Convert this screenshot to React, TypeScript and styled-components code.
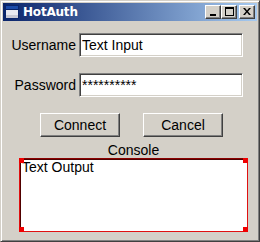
import styled, { createGlobalStyle } from 'styled-components';

const Face = '#D4D0C8';
const Shadow = '#808080';
const DarkShadow = '#404040';

const GlobalStyle = createGlobalStyle`
  html, body {
    margin: 0;
    padding: 0;
    background: ${Face};
  }
  body {
    font-family: "Liberation Sans", Arial, sans-serif;
  }
`

function AppIcon() {
  return (
    <svg width="14" height="14" viewBox="0 0 14 14">
      <rect x="0.5" y="0.5" width="13" height="13" fill="#ffffff" stroke="#0A246A" />
      <rect x="1" y="1" width="12" height="3" fill="#1C4BA8" />
      <rect x="1" y="4" width="12" height="1" fill="#0A246A" />
      <rect x="1" y="5" width="12" height="8" fill="#E8E8F0" />
      <rect x="1" y="10" width="12" height="3" fill="#C8C8D4" />
    </svg>
  );
}

function MinGlyph() {
  return (
    <svg width="8" height="8" viewBox="0 0 8 8">
      <rect x="1" y="6" width="6" height="2" fill="#000" />
    </svg>
  );
}

function MaxGlyph() {
  return (
    <svg width="9" height="9" viewBox="0 0 9 9">
      <rect x="0.5" y="0.5" width="8" height="8" fill="none" stroke="#000" />
      <rect x="0" y="1" width="9" height="1" fill="#000" />
    </svg>
  );
}

function CloseGlyph() {
  return (
    <svg width="8" height="7" viewBox="0 0 8 7">
      <path d="M0 0h2l2 2.5L6 0h2L5 3.5 8 7H6L4 4.5 2 7H0l3-3.5z" fill="#000" />
    </svg>
  );
}

export default function App() {
  return (
    <>
      <GlobalStyle />
      <Window>
        <TitleBar>
          <AppIcon />
          <Caption>HotAuth</Caption>
          <CaptionButtons>
            <CaptionButton><MinGlyph /></CaptionButton>
            <CaptionButton><MaxGlyph /></CaptionButton>
            <CaptionButton $gap><CloseGlyph /></CaptionButton>
          </CaptionButtons>
        </TitleBar>

        <Client>
          <Form>
            <Label>Username</Label>
            <Input defaultValue="Text Input" />
            <Label>Password</Label>
            <Input defaultValue="**********" />
          </Form>

          <ButtonRow>
            <Button>Connect</Button>
            <Button>Cancel</Button>
          </ButtonRow>

          <ConsoleSection>
            <ConsoleLabel>Console</ConsoleLabel>
            <ConsoleBox>
              Text Output
              <Handle $top $left />
              <Handle $top />
              <Handle $left />
              <Handle />
            </ConsoleBox>
          </ConsoleSection>
        </Client>
      </Window>
    </>
  );
}

const Window = styled.div`
  width: 260px;
  height: 242px;
  box-sizing: border-box;
  display: flex;
  flex-direction: column;
  background: ${Face};
  border: 1px solid;
  border-color: ${Face} ${DarkShadow} ${DarkShadow} ${Face};
  box-shadow: inset 1px 1px #ffffff, inset -1px -1px ${Shadow};
  padding: 2px;
`

const TitleBar = styled.div`
  height: 18px;
  flex-shrink: 0;
  display: flex;
  align-items: center;
  padding: 0 2px 0 2px;
  background: linear-gradient(to right, #0A246A, #A6CAF0);
  color: #ffffff;
`

const Caption = styled.span`
  margin-left: 4px;
  font-family: "DejaVu Sans", "Liberation Sans", sans-serif;
  font-weight: bold;
  font-size: 12px;
  letter-spacing: -0.2px;
  flex: 1;
`

const CaptionButtons = styled.div`
  display: flex;
  align-items: center;
`

const CaptionButton = styled.div<{ $gap?: boolean }>`
  width: 16px;
  height: 14px;
  box-sizing: border-box;
  margin-left: ${props => props.$gap ? '2px' : '0'};
  background: ${Face};
  border: 1px solid;
  border-color: #ffffff ${DarkShadow} ${DarkShadow} #ffffff;
  box-shadow: inset -1px -1px ${Shadow};
  display: flex;
  align-items: center;
  justify-content: center;
  padding-bottom: 1px;
`

const Client = styled.div`
  flex: 1;
  display: flex;
  flex-direction: column;
  font-size: 14px;
  color: #000000;
`

const Form = styled.div`
  margin-top: 12px;
  padding-left: 7px;
  display: grid;
  grid-template-columns: 66px 164px;
  column-gap: 3px;
  row-gap: 16px;
  align-items: center;
`

const Label = styled.div`
  text-align: right;
  white-space: nowrap;
`

const Input = styled.input`
  width: 164px;
  height: 24px;
  box-sizing: border-box;
  margin: 0;
  padding: 0 2px;
  font-family: "Liberation Sans", Arial, sans-serif;
  font-size: 14px;
  color: #000000;
  background: #ffffff;
  border: 1px solid;
  border-color: ${Shadow} #ffffff #ffffff ${Shadow};
  box-shadow: inset 1px 1px ${DarkShadow}, inset -1px -1px ${Face};
  outline: none;
`

const ButtonRow = styled.div`
  margin-top: 16px;
  padding-left: 37px;
  display: flex;
  gap: 23px;
`

const Button = styled.button`
  width: 80px;
  height: 24px;
  box-sizing: border-box;
  margin: 0;
  padding: 0;
  font-family: "Liberation Sans", Arial, sans-serif;
  font-size: 14px;
  color: #000000;
  background: ${Face};
  border: 1px solid;
  border-color: #ffffff ${DarkShadow} ${DarkShadow} #ffffff;
  box-shadow: inset -1px -1px ${Shadow};
`

const ConsoleSection = styled.div`
  margin-top: 5px;
  margin-left: 16px;
  width: 229px;
  display: flex;
  flex-direction: column;
`

const ConsoleLabel = styled.div`
  text-align: center;
  line-height: 16px;
`

const ConsoleBox = styled.div`
  position: relative;
  height: 74px;
  box-sizing: border-box;
  padding: 0 2px;
  line-height: 16px;
  background: #ffffff;
  border: 1px solid #E01010;
  border-top-color: #8A0000;
  box-shadow: inset 1px 1px #500000;
`

const Handle = styled.div<{ $top?: boolean; $left?: boolean }>`
  position: absolute;
  width: 5px;
  height: 5px;
  background: #F00000;
  ${props => props.$top ? 'top: -1px;' : 'bottom: -1px;'}
  ${props => props.$left ? 'left: -1px;' : 'right: -1px;'}
`
